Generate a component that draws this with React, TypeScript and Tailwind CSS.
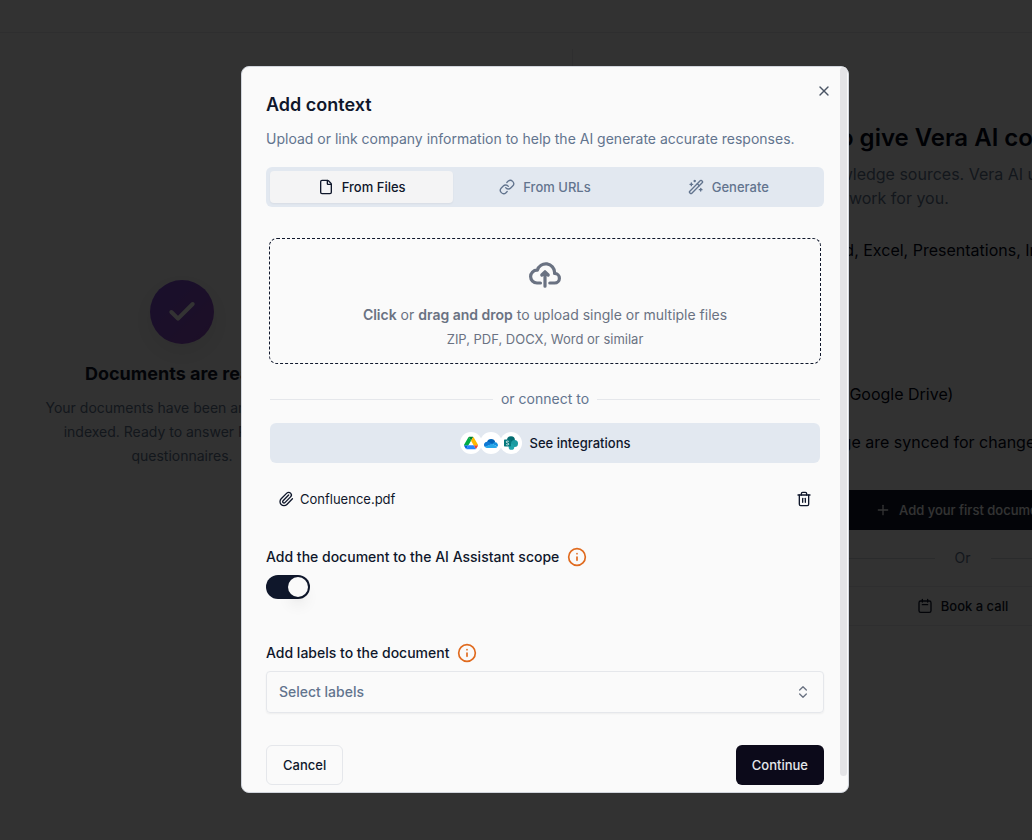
import { useState } from "react";
import { File, Link, Paperclip, Plus, Trash2, WandSparkles, X, Check, Info, ChevronsUpDown } from "lucide-react";

const tabs = [
  { name: "From Files", icon: File },
  { name: "From URLs", icon: Link },
  { name: "Generate", icon: WandSparkles },
];

const sources = [
  "Upload documents as PDF, Word, Excel, Presentations, Images",
  "Websites and help pages",
  "Generated company overview",
  "Your cloud storage (SharePoint, Google Drive)",
  "Connected drive files and storage are synced for changes",
];

const DriveLogo = () => (
  <svg viewBox="0 0 87 78" className="size-[14px]" aria-hidden="true">
    <path d="M6.6 66.85l3.85 6.65c.8 1.4 1.95 2.5 3.3 3.3L27.5 53H0c0 1.55.4 3.1 1.2 4.5z" fill="#0066da" />
    <path d="M43.65 25L29.9 1.2c-1.35.8-2.5 1.9-3.3 3.3L1.2 48.5A9 9 0 0 0 0 53h27.5z" fill="#00ac47" />
    <path d="M73.55 76.8c1.35-.8 2.5-1.9 3.3-3.3l1.6-2.75L86.1 57.5c.8-1.4 1.2-2.95 1.2-4.5H59.8l5.85 11.5z" fill="#ea4335" />
    <path d="M43.65 25L57.4 1.2C56.05.4 54.5 0 52.9 0H34.4c-1.6 0-3.15.45-4.5 1.2z" fill="#00832d" />
    <path d="M59.8 53H27.5L13.75 76.8c1.35.8 2.9 1.2 4.5 1.2h50.8c1.6 0 3.15-.45 4.5-1.2z" fill="#2684fc" />
    <path d="M73.4 26.5L60.7 4.5c-.8-1.4-1.95-2.5-3.3-3.3L43.65 25 59.8 53h27.45c0-1.55-.4-3.1-1.2-4.5z" fill="#ffba00" />
  </svg>
);

const OneDriveLogo = () => (
  <svg viewBox="0 0 28 18" className="w-[14px]" aria-hidden="true">
    <path d="M6 6.500A8.500 8.500 0 0 1 22.500 6.700L16 12z" fill="#0364b8" />
    <path d="M6.500 5.600c1.600-.3 3.400 0 4.800.9L17 10 2 16A6 6 0 0 1 6.500 5.600z" fill="#0f78d4" />
    <path d="M22 6.700a5.600 5.600 0 0 1 5 8.500L16.500 10l2.300-2.300c.9-.6 2-1 3.200-1z" fill="#1490df" />
    <path d="M16.500 9.600L27 15.300a5.600 5.600 0 0 1-4.600 2.700H6.200a6 6 0 0 1-4.600-2.400z" fill="#28a8ea" />
  </svg>
);

const SharePointLogo = () => (
  <svg viewBox="0 0 32 32" className="size-[14px]" aria-hidden="true">
    <circle cx="16" cy="9.5" r="9" fill="#036c70" />
    <circle cx="24" cy="17" r="8" fill="#1a9ba1" />
    <circle cx="17" cy="25" r="6.5" fill="#1fa5ab" />
    <rect x="0" y="8" width="16" height="16" rx="1.5" fill="#03787c" />
    <path d="M11 12.500C9 11 5 11.300 5 13.600c0 2.600 6 2 6 4.800 0 2.300-4 2.600-6.200 1.100" fill="none" stroke="#fff" strokeWidth="1.8" />
  </svg>
);

const CloudUpload = () => (
  <svg viewBox="0 0 20 16" fill="none" className="size-8 text-gray-500" aria-hidden="true">
    <path
      stroke="currentColor"
      strokeLinecap="round"
      strokeLinejoin="round"
      strokeWidth="2"
      d="M13 13h3a3 3 0 0 0 0-6h-.025A5.56 5.56 0 0 0 16 6.5 5.5 5.5 0 0 0 5.207 5.021C5.137 5.017 5.071 5 5 5a4 4 0 0 0 0 8h2.167M10 15V6m0 0L8 8m2-2 2 2"
    />
  </svg>
);

const CalendarIcon = () => (
  <svg viewBox="0 0 24 24" fill="none" stroke="currentColor" strokeWidth="2" strokeLinecap="round" className="size-4" aria-hidden="true">
    <rect x="3" y="4.5" width="18" height="17" rx="2.5" />
    <path d="M8 2v4M16 2v4M8 10h8" />
  </svg>
);

const Background = () => (
  <div className="h-screen overflow-hidden bg-[#fafafa]">
    <header className="h-[33px] border-b border-gray-200"></header>
    <div className="flex pt-4">
      <section className="flex w-[364px] shrink-0 flex-col items-center px-10 pt-[231px] text-center">
        <div className="flex size-16 items-center justify-center rounded-full bg-linear-to-br from-[#7c4fd8] to-[#9148c0] shadow-[0_8px_30px_rgb(0_0_0/0.1)]">
          <Check className="size-8 text-white" strokeWidth={3} />
        </div>
        <h2 className="mt-4 text-lg font-bold text-slate-900">Documents are ready!</h2>
        <p className="mt-2 text-sm leading-6 text-slate-500">
          Your documents have been analyzed and indexed. Ready to answer RFPs and questionnaires.
        </p>
      </section>

      <section className="ml-[208px] w-[780px] shrink-0 border-l border-gray-200 px-8 pt-[73px]">
        <h2 className="text-2xl font-semibold text-slate-950">Connect your docs to give Vera AI context</h2>
        <p className="mt-2 text-base text-slate-500">
          Add public documents and knowledge sources. Vera AI uses them <br />
          to learn quickly and do the hard work for you.
        </p>
        <ul className="mt-7 space-y-6 text-base text-slate-950">
          {sources.map((source) => (
            <li key={source}>{source}</li>
          ))}
        </ul>
        <button className="mt-9 flex h-10 w-full items-center justify-center gap-2 rounded-md bg-slate-900 text-[13px] leading-5 font-medium text-white">
          <Plus className="size-4" />
          Add your first document
        </button>
        <div className="flex h-14 items-center gap-5 text-sm text-slate-500">
          <hr className="flex-1 border-gray-300" />
          Or
          <hr className="flex-1 border-gray-300" />
        </div>
        <button className="flex h-10 w-full items-center justify-center gap-2 rounded-md border border-gray-200 text-[13px] leading-5 font-medium text-slate-900">
          <CalendarIcon />
          Book a call
        </button>
      </section>
    </div>
  </div>
);

const App = () => {
  const [tab, setTab] = useState("From Files");
  const [inScope, setInScope] = useState(true);

  return (
    <main className="relative font-['Inter',sans-serif]">
      <Background />

      {/* overlay */}
      <div className="absolute inset-0 flex items-center justify-center bg-black/80 pt-[19px] pl-[58px]">
        <div role="dialog" aria-labelledby="title" className="relative w-full max-w-[608px] rounded-lg border border-gray-300 bg-[#fafafa] px-6 pt-6 pb-[7px] text-slate-900">
          <div className="absolute top-0 right-px h-[709px] w-[7px] rounded-full bg-[#e4e4e7]"></div>
          <button aria-label="Close" className="absolute top-4 right-4 text-gray-600">
            <X className="size-4" />
          </button>

          <h1 id="title" className="text-lg font-semibold">Add context</h1>
          <p className="mt-2 text-sm leading-6 text-slate-500">Upload or link company information to help the AI generate accurate responses.</p>

          {/* tabs */}
          <div role="tablist" className="mt-4 grid h-10 grid-cols-3 rounded-md bg-slate-200 p-1">
            {tabs.map(({ name, icon: Icon }) => (
              <button
                key={name}
                role="tab"
                aria-selected={tab === name}
                onClick={() => setTab(name)}
                className={`flex items-center justify-center gap-2 rounded-sm text-[13px] leading-5 font-medium ${tab === name ? "bg-[#f4f4f5] shadow-xs" : "text-slate-500"}`}
              >
                <Icon className="size-4" />
                {name}
              </button>
            ))}
          </div>

          <div className="px-[3px]">
            <label className="mt-[31px] flex h-[126px] cursor-pointer flex-col items-center rounded-lg border border-dashed border-slate-900 pt-5 text-gray-500">
              <CloudUpload />
              <span className="mt-[14px] text-sm">
                <b className="font-semibold">Click</b> or <b className="font-semibold">drag and drop</b> to upload single or multiple files
              </span>
              <span className="mt-1 text-[13px] leading-5">ZIP, PDF, DOCX, Word or similar</span>
              <input type="file" multiple className="sr-only" />
            </label>
          </div>

          <div className="px-1">
            <div className="mt-[25px] flex items-center gap-2 text-sm text-slate-500">
              <hr className="flex-1 border-gray-200" />
              or connect to
              <hr className="flex-1 border-gray-200" />
            </div>

            <button className="mt-[14px] flex h-10 w-full items-center justify-center gap-2 rounded-md bg-slate-200 text-[13px] leading-5 font-medium">
              <span className="flex -space-x-0.5">
                <span className="flex size-[22px] items-center justify-center rounded-full bg-white"><DriveLogo /></span>
                <span className="flex size-[22px] items-center justify-center rounded-full bg-white"><OneDriveLogo /></span>
                <span className="flex size-[22px] items-center justify-center rounded-full bg-white"><SharePointLogo /></span>
              </span>
              See integrations
            </button>

            <div className="mt-4 flex h-10 items-center gap-1.5 px-2 text-[13px] leading-5">
              <Paperclip className="size-4" />
              Confluence.pdf
              <button aria-label="Remove file" className="ml-auto">
                <Trash2 className="size-4" />
              </button>
            </div>
          </div>

          <div className="mt-7 flex items-center gap-2 text-sm font-medium">
            <span id="scope">Add the document to the AI Assistant scope</span>
            <Info className="size-5 text-[#e06a1e]" />
          </div>
          <button
            role="switch"
            aria-checked={inScope}
            aria-labelledby="scope"
            onClick={() => setInScope(!inScope)}
            className={`mt-2 flex h-6 w-11 items-center rounded-full p-0.5 ${inScope ? "justify-end bg-slate-900" : "bg-slate-200"}`}
          >
            <span className="size-5 rounded-full bg-[#fafafa] shadow-lg"></span>
          </button>

          <div className="mt-11 flex items-center gap-2 text-sm font-medium">
            <label htmlFor="labels">Add labels to the document</label>
            <Info className="size-5 text-[#e06a1e]" />
          </div>
          <div className="relative mt-2">
            <select id="labels" className="h-[42px] w-full appearance-none rounded-sm border border-gray-200 px-3 text-sm font-medium text-slate-500 shadow-xs">
              <option>Select labels</option>
            </select>
            <ChevronsUpDown className="pointer-events-none absolute top-[13px] right-[13px] size-4 text-gray-500" />
          </div>

          <div className="mt-8 flex justify-between text-[13px] leading-5 font-medium">
            <button className="h-10 rounded-md border border-gray-200 px-4">Cancel</button>
            <button className="h-10 rounded-md bg-[#0c0a1a] px-4 text-gray-200">Continue</button>
          </div>
        </div>
      </div>
    </main>
  );
};

export default App;
